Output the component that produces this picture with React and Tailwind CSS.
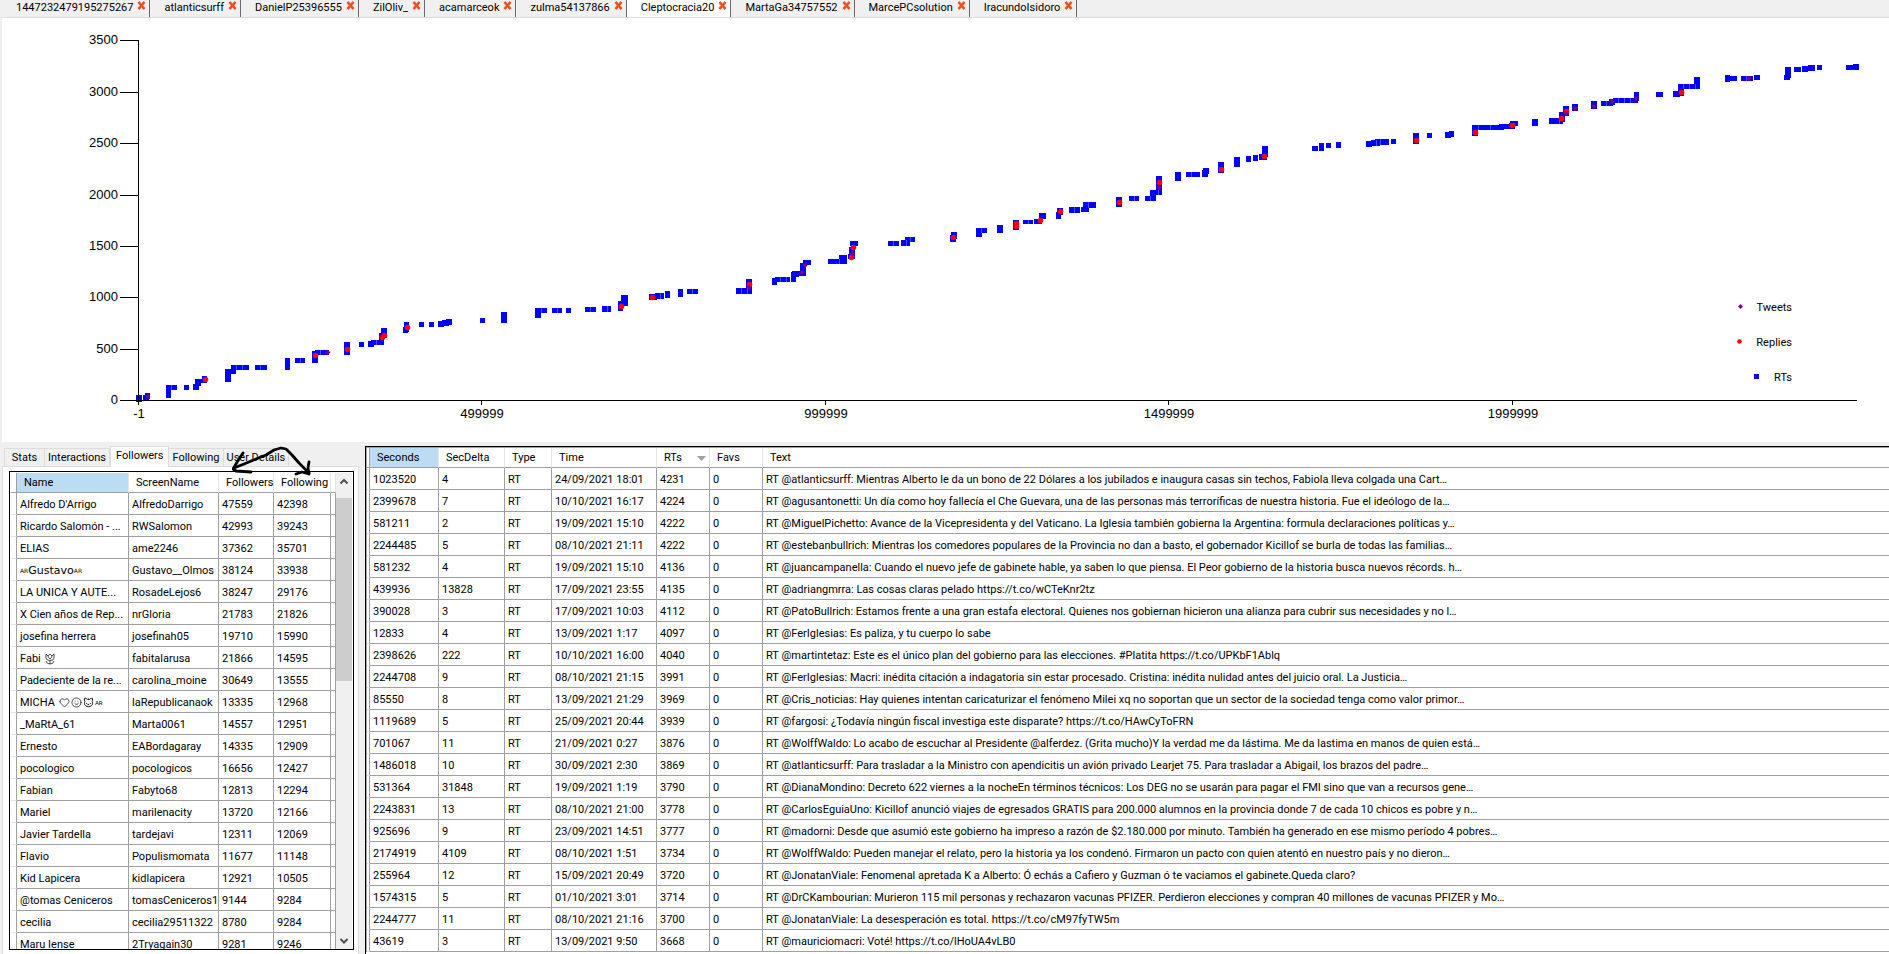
import React, { useState } from 'react';
import { Heart, Smile, Cat } from 'lucide-react';

const userTabs = [
    "1447232479195275267",
    "atlanticsurff",
    "DanielP25396555",
    "ZilOliv_",
    "acamarceok",
    "zulma54137866",
    "Cleptocracia20",
    "MartaGa34757552",
    "MarcePCsolution",
    "IracundoIsidoro",
];

const detailTabs = ["Stats", "Interactions", "Followers", "Following", "User Details"];

// x, y, right, bottom of each run of retweets
const rtRuns = [
    [136, 395, 142, 402], [143, 395, 149, 400], [145, 393, 150, 399], [166, 385, 171, 398], [166, 385, 177, 390],
    [184, 385, 189, 390], [193, 384, 199, 390], [195, 379, 201, 386], [199, 379, 207, 383], [202, 376, 207, 383],
    [225, 369, 231, 382], [228, 369, 236, 374], [231, 365, 249, 370], [255, 365, 267, 370], [285, 358, 290, 370],
    [295, 358, 305, 363], [312, 351, 318, 363], [315, 350, 329, 355], [344, 342, 350, 355], [359, 342, 364, 347],
    [368, 341, 374, 347], [371, 340, 384, 345], [379, 333, 384, 345], [381, 328, 387, 338], [403, 327, 408, 333],
    [404, 322, 409, 332], [419, 322, 424, 327], [429, 322, 434, 327], [438, 321, 444, 327], [442, 320, 449, 326],
    [446, 319, 452, 325], [480, 318, 485, 323], [501, 312, 507, 323], [535, 308, 541, 318], [536, 308, 547, 313],
    [552, 308, 562, 313], [566, 308, 571, 313], [585, 307, 596, 312], [602, 306, 611, 312], [618, 301, 623, 311],
    [621, 295, 628, 306], [649, 294, 657, 300], [655, 293, 664, 299], [665, 291, 670, 298], [678, 289, 683, 297],
    [687, 289, 698, 294], [736, 288, 751, 294], [746, 279, 752, 294], [772, 278, 777, 285], [775, 277, 790, 282],
    [791, 272, 796, 282], [792, 271, 799, 277], [797, 271, 805, 276], [800, 263, 806, 276], [803, 260, 811, 265],
    [828, 259, 834, 264], [834, 259, 845, 264], [839, 255, 847, 264], [848, 254, 854, 259], [849, 247, 855, 259],
    [850, 241, 858, 246], [888, 241, 899, 246], [901, 240, 910, 246], [905, 237, 915, 242], [950, 235, 956, 242],
    [951, 232, 957, 239], [976, 228, 982, 237], [976, 228, 987, 233], [997, 225, 1003, 233], [1013, 220, 1019, 230],
    [1023, 220, 1033, 224], [1034, 219, 1042, 224], [1039, 213, 1046, 219], [1056, 212, 1061, 219], [1057, 208, 1063, 215],
    [1069, 207, 1080, 213], [1081, 207, 1089, 212], [1083, 203, 1088, 212], [1083, 202, 1096, 208], [1116, 197, 1122, 207],
    [1129, 196, 1139, 201], [1145, 196, 1156, 201], [1150, 190, 1156, 201], [1153, 190, 1162, 195], [1156, 176, 1162, 195],
    [1175, 172, 1181, 181], [1186, 172, 1200, 177], [1202, 170, 1208, 177], [1203, 168, 1209, 174], [1218, 162, 1224, 173],
    [1234, 157, 1240, 167], [1246, 156, 1251, 162], [1253, 155, 1258, 161], [1259, 154, 1267, 160], [1262, 146, 1268, 157],
    [1312, 146, 1318, 151], [1319, 143, 1324, 151], [1326, 143, 1331, 148], [1336, 142, 1341, 148], [1366, 141, 1372, 147],
    [1371, 140, 1380, 146], [1375, 139, 1389, 145], [1391, 139, 1396, 144], [1413, 133, 1419, 144], [1427, 133, 1432, 138],
    [1445, 132, 1451, 138], [1449, 131, 1454, 137], [1472, 125, 1478, 136], [1473, 125, 1485, 130], [1485, 125, 1499, 130],
    [1499, 124, 1504, 130], [1503, 124, 1509, 129], [1509, 123, 1515, 129], [1510, 121, 1518, 126], [1532, 119, 1538, 126],
    [1549, 118, 1554, 124], [1554, 118, 1563, 124], [1559, 112, 1565, 122], [1563, 106, 1569, 116], [1572, 104, 1578, 111],
    [1591, 101, 1597, 109], [1601, 101, 1613, 106], [1609, 99, 1615, 105], [1613, 98, 1638, 103], [1634, 92, 1639, 101],
    [1656, 92, 1663, 97], [1673, 91, 1680, 97], [1678, 84, 1684, 96], [1678, 84, 1700, 89], [1694, 77, 1700, 88],
    [1725, 75, 1730, 82], [1730, 76, 1737, 81], [1741, 76, 1753, 81], [1754, 75, 1760, 80], [1784, 75, 1790, 80],
    [1785, 67, 1791, 78], [1794, 67, 1801, 72], [1802, 66, 1808, 72], [1808, 65, 1815, 71], [1817, 65, 1822, 70],
    [1846, 65, 1853, 70], [1853, 64, 1859, 70],
];

const replies = [
    [205, 379], [315, 355], [347, 349], [382, 337], [384, 335], [407, 327], [621, 306], [652, 297], [749, 284],
    [853, 247], [851, 257], [953, 237], [1016, 223], [1016, 226], [1040, 220], [1060, 211], [1119, 202], [1159, 182],
    [1221, 169], [1264, 156], [1416, 140], [1475, 132], [1512, 125], [1561, 118], [1566, 111], [1681, 92],
];

const tweets = [
    [148, 396], [328, 352], [749, 287], [802, 272], [805, 265], [852, 253], [1159, 187], [1566, 113],
    [1575, 108], [1594, 106], [1612, 101], [1636, 98], [1749, 78],
];

// light gaps left between the squares of the long flat runs
const seams = rtRuns.flatMap(([x, y, r, b]) => {
    const list = [];
    if (b - y > 6) return list;
    for (let s = x + 5; s < r - 3; s += 6) {
        list.push([s, y, b]);
    }
    return list;
});

const yTicks = [
    { value: 3500, y: 40 },
    { value: 3000, y: 92 },
    { value: 2500, y: 143 },
    { value: 2000, y: 195 },
    { value: 1500, y: 246 },
    { value: 1000, y: 297 },
    { value: 500, y: 349 },
    { value: 0, y: 400 },
];

const xTicks = [
    { value: -1, x: 139 },
    { value: 499999, x: 482 },
    { value: 999999, x: 826 },
    { value: 1499999, x: 1169 },
    { value: 1999999, x: 1513 },
];

const followers = [
    { name: "Alfredo D'Arrigo", screen: "AlfredoDarrigo", followers: 47559, following: 42398 },
    { name: "Ricardo Salomón - ...", screen: "RWSalomon", followers: 42993, following: 39243 },
    { name: "ELIAS", screen: "ame2246", followers: 37362, following: 35701 },
    { name: "Gustavo", screen: "Gustavo__Olmos", followers: 38124, following: 33938, style: "flags" },
    { name: "LA UNICA Y AUTE...", screen: "RosadeLejos6", followers: 38247, following: 29176 },
    { name: "X Cien años de Rep...", screen: "nrGloria", followers: 21783, following: 21826 },
    { name: "josefina herrera", screen: "josefinah05", followers: 19710, following: 15990 },
    { name: "Fabi", screen: "fabitalarusa", followers: 21866, following: 14595, style: "tulip" },
    { name: "Padeciente de la re...", screen: "carolina_moine", followers: 30649, following: 13555 },
    { name: "MICHA", screen: "laRepublicanaok", followers: 13335, following: 12968, style: "faces" },
    { name: "_MaRtA_61", screen: "Marta0061", followers: 14557, following: 12951 },
    { name: "Ernesto", screen: "EABordagaray", followers: 14335, following: 12909 },
    { name: "pocologico", screen: "pocologicos", followers: 16656, following: 12427 },
    { name: "Fabian", screen: "Fabyto68", followers: 12813, following: 12294 },
    { name: "Mariel", screen: "marilenacity", followers: 13720, following: 12166 },
    { name: "Javier Tardella", screen: "tardejavi", followers: 12311, following: 12069 },
    { name: "Flavio", screen: "Populismomata", followers: 11677, following: 11148 },
    { name: "Kid Lapicera", screen: "kidlapicera", followers: 12921, following: 10505 },
    { name: "@tomas Ceniceros", screen: "tomasCeniceros1", followers: 9144, following: 9284 },
    { name: "cecilia", screen: "cecilia29511322", followers: 8780, following: 9284 },
    { name: "Maru Iense", screen: "2Tryagain30", followers: 9281, following: 9246 },
];

const tweetRows = [
    [1023520, 4, "24/09/2021 18:01", 4231, "RT @atlanticsurff: Mientras Alberto le da un bono de 22 Dólares a los jubilados e inaugura casas sin techos, Fabiola lleva colgada una Cart…"],
    [2399678, 7, "10/10/2021 16:17", 4224, "RT @agusantonetti: Un día como hoy fallecía el Che Guevara, una de las personas más terroríficas de nuestra historia. Fue el ideólogo de la…"],
    [581211, 2, "19/09/2021 15:10", 4222, "RT @MiguelPichetto: Avance de la Vicepresidenta y del Vaticano. La Iglesia también gobierna la Argentina: formula declaraciones políticas y…"],
    [2244485, 5, "08/10/2021 21:11", 4222, "RT @estebanbullrich: Mientras los comedores populares de la Provincia no dan a basto, el gobernador Kicillof se burla de todas las familias…"],
    [581232, 4, "19/09/2021 15:10", 4136, "RT @juancampanella: Cuando el nuevo jefe de gabinete hable, ya saben lo que piensa. El Peor gobierno de la historia busca nuevos récords. h…"],
    [439936, 13828, "17/09/2021 23:55", 4135, "RT @adriangmrra: Las cosas claras pelado https://t.co/wCTeKnr2tz"],
    [390028, 3, "17/09/2021 10:03", 4112, "RT @PatoBullrich: Estamos frente a una gran estafa electoral. Quienes nos gobiernan hicieron una alianza para cubrir sus necesidades y no l…"],
    [12833, 4, "13/09/2021 1:17", 4097, "RT @FerIglesias: Es paliza, y tu cuerpo lo sabe"],
    [2398626, 222, "10/10/2021 16:00", 4040, "RT @martintetaz: Este es el único plan del gobierno para las elecciones. #Platita https://t.co/UPKbF1Ablq"],
    [2244708, 9, "08/10/2021 21:15", 3991, "RT @FerIglesias: Macri: inédita citación a indagatoria sin estar procesado. Cristina: inédita nulidad antes del juicio oral. La Justicia…"],
    [85550, 8, "13/09/2021 21:29", 3969, "RT @Cris_noticias: Hay quienes intentan caricaturizar el fenómeno Milei xq no soportan que un sector de la sociedad tenga como valor primor…"],
    [1119689, 5, "25/09/2021 20:44", 3939, "RT @fargosi: ¿Todavía ningún fiscal investiga este disparate? https://t.co/HAwCyToFRN"],
    [701067, 11, "21/09/2021 0:27", 3876, "RT @WolffWaldo: Lo acabo de escuchar al Presidente @alferdez. (Grita mucho)Y la verdad me da lástima. Me da lastima en manos de quien está…"],
    [1486018, 10, "30/09/2021 2:30", 3869, "RT @atlanticsurff: Para trasladar a la Ministro con apendicitis un avión privado Learjet 75. Para trasladar a Abigail, los brazos del padre…"],
    [531364, 31848, "19/09/2021 1:19", 3790, "RT @DianaMondino: Decreto 622 viernes a la nocheEn términos técnicos: Los DEG no se usarán para pagar el FMI sino que van a recursos gene…"],
    [2243831, 13, "08/10/2021 21:00", 3778, "RT @CarlosEguiaUno: Kicillof anunció viajes de egresados GRATIS para 200.000 alumnos en la provincia donde 7 de cada 10 chicos es pobre y n…"],
    [925696, 9, "23/09/2021 14:51", 3777, "RT @madorni: Desde que asumió este gobierno ha impreso a razón de $2.180.000 por minuto. También ha generado en ese mismo período 4 pobres…"],
    [2174919, 4109, "08/10/2021 1:51", 3734, "RT @WolffWaldo: Pueden manejar el relato, pero la historia ya los condenó. Firmaron un pacto con quien atentó en nuestro país y no dieron…"],
    [255964, 12, "15/09/2021 20:49", 3720, "RT @JonatanViale: Fenomenal apretada K a Alberto: Ó echás a Cafiero y Guzman ó te vaciamos el gabinete.Queda claro?"],
    [1574315, 5, "01/10/2021 3:01", 3714, "RT @DrCKambourian: Murieron 115 mil personas y rechazaron vacunas PFIZER. Perdieron elecciones y compran 40 millones de vacunas PFIZER y Mo…"],
    [2244777, 11, "08/10/2021 21:16", 3700, "RT @JonatanViale: La desesperación es total. https://t.co/cM97fyTW5m"],
    [43619, 3, "13/09/2021 9:50", 3668, "RT @mauriciomacri: Voté! https://t.co/lHoUA4vLB0"],
];

const th = "border-r border-b border-r-[#e5e5e5] border-b-[#a0a0a0] pt-px pl-[7px] text-left font-normal";
const td = "border-r border-b border-[#a0a0a0] pt-[2px] pl-[3px] whitespace-nowrap";

const CloseIcon = () => (
    <svg width="9" height="9" viewBox="0 0 9 9" className="block">
        <path d="M1.5 1 L7.5 8 M7.5 1 L1.5 8" stroke="#f3a58c" strokeWidth="3.2" />
        <path d="M1.5 1 L7.5 8 M7.5 1 L1.5 8" stroke="#e8501e" strokeWidth="2" />
    </svg>
);

const TulipIcon = () => (
    <svg width="10" height="12" viewBox="0 0 10 12" className="block" fill="none" stroke="#222" strokeWidth="0.8">
        <path d="M1 1 L3 3 L5 1 L7 3 L9 1 V5 Q9 7.5 5 7.5 Q1 7.5 1 5 Z" />
        <path d="M3 3 Q3.5 5 5 6 Q6.5 5 7 3 M5 7.5 V11 M5 11 Q1.5 11 1 8 M5 11 Q8.5 11 9 8" />
    </svg>
);

const UserTabs = () => {
    const [active, setActive] = useState("Cleptocracia20");

    return (
        <div className="flex h-[17px] shrink-0 bg-[#f0f0f0] pl-[2px]">
            {userTabs.map((tab) => (
                <div
                    key={tab}
                    className={`flex items-start border-r border-r-[#696969] pr-[3px] pl-[14px] ${active === tab ? "bg-white" : ""}`}
                >
                    <button onClick={() => setActive(tab)} className="leading-4 whitespace-nowrap">{tab}</button>
                    <button aria-label={`Close ${tab}`} className="ml-1 pt-px"><CloseIcon /></button>
                </div>
            ))}
        </div>
    );
};

const Chart = () => (
    <div className="shrink-0 border-t border-l-2 border-t-[#dcdcdc] border-l-[#f0f0f0] bg-white">
        <svg viewBox="2 18 1887 424" className="block w-full font-['Liberation_Sans',sans-serif] text-[13px]">
            {/* Points */}
            <g fill="#0000ff">
                {rtRuns.map(([x, y, r, b], i) => (
                    <rect key={i} x={x} y={y} width={r - x} height={b - y} />
                ))}
            </g>
            <g fill="#fff" fillOpacity="0.3">
                {seams.map(([x, y, b], i) => (
                    <rect key={i} x={x} y={y} width="1" height={b - y} />
                ))}
            </g>
            <g fill="#ff0000">
                {replies.map(([x, y], i) => (
                    <circle key={i} cx={x + 0.5} cy={y + 0.5} r="2.8" />
                ))}
            </g>
            <g fill="#800080">
                {tweets.map(([x, y], i) => (
                    <path key={i} d={`M${x} ${y - 2} l2.5 2.5 l-2.5 2.5 l-2.5 -2.5 Z`} />
                ))}
            </g>

            {/* Axes */}
            <g stroke="#000" strokeWidth="1" shapeRendering="crispEdges">
                <line x1="138.5" y1="40" x2="138.5" y2="405" />
                <line x1="120" y1="400.5" x2="1857" y2="400.5" />
                {yTicks.map((t) => (
                    <line key={t.value} x1="120" y1={t.y + 0.5} x2="139" y2={t.y + 0.5} />
                ))}
                {xTicks.map((t) => (
                    <line key={t.value} x1={t.x - 0.5} y1="400" x2={t.x - 0.5} y2="405" />
                ))}
            </g>
            {yTicks.map((t) => (
                <text key={t.value} x="118" y={t.y + 4} textAnchor="end">{t.value}</text>
            ))}
            {xTicks.map((t) => (
                <text key={t.value} x={t.x} y="418" textAnchor="middle">{t.value}</text>
            ))}

            {/* Legend */}
            <g className="font-['Roboto',sans-serif] text-[11px]" textAnchor="end">
                <path d="M1740.5 304 l2.5 2.5 l-2.5 2.5 l-2.5 -2.5 Z" fill="#800080" />
                <text x="1792" y="311">Tweets</text>
                <circle cx="1739.5" cy="341.5" r="2.3" fill="#ff0000" />
                <text x="1792" y="346">Replies</text>
                <rect x="1754" y="374" width="5" height="5" fill="#0000ff" />
                <text x="1792" y="381">RTs</text>
            </g>
        </svg>
    </div>
);

const FollowerName = ({ row }) => {
    if (row.style === "flags") {
        return (
            <span className="flex items-center font-['DejaVu_Sans',sans-serif]">
                <span className="text-[6px]">AR</span>
                {row.name}
                <span className="text-[6px]">AR</span>
            </span>
        );
    }
    return (
        <span className="flex items-center">
            {row.name}
            {row.style === "tulip" && <span className="ml-1"><TulipIcon /></span>}
            {row.style === "faces" && (
                <span className="ml-1 flex items-center gap-px">
                    <Heart size={11} strokeWidth={1.5} />
                    <Smile size={11} strokeWidth={1.5} />
                    <Cat size={11} strokeWidth={2} />
                    <span className="text-[6px]">AR</span>
                </span>
            )}
        </span>
    );
};

const ScrollBar = () => (
    <div className="flex w-4 shrink-0 flex-col items-center bg-[#f0f0f0]">
        <svg width="16" height="25" viewBox="0 0 16 25" className="block shrink-0" fill="none" stroke="#505050" strokeWidth="2">
            <path d="M4.5 10.5 L8 7 L11.5 10.5" />
        </svg>
        <div className="h-[183px] w-full shrink-0 bg-[#cdcdcd]" />
        <svg width="16" height="16" viewBox="0 0 16 16" className="mt-auto block shrink-0" fill="none" stroke="#505050" strokeWidth="2">
            <path d="M4.5 6 L8 9.5 L11.5 6" />
        </svg>
    </div>
);

const FollowersGrid = () => (
    <div className="flex min-h-0 flex-1 overflow-hidden border border-black bg-white pt-px pr-px">
        <div className="min-w-0 flex-1 overflow-hidden pl-px">
            <table className="w-full table-fixed border-separate border-spacing-0">
                <colgroup>
                    <col className="w-[6px]" />
                    <col className="w-[112px]" />
                    <col className="w-[90px]" />
                    <col className="w-[55px]" />
                    <col className="w-[57px]" />
                    <col />
                </colgroup>
                <thead>
                    <tr className="h-5">
                        <td className="border-r border-b border-[#a0a0a0]" />
                        <th className={`${th} bg-[#bcdcf4]`}>Name</th>
                        <th className={th}>ScreenName</th>
                        <th className={th}>Followers</th>
                        <th className={th}>Following</th>
                        <td className="border-r border-b border-r-[#e5e5e5] border-b-[#a0a0a0]" />
                    </tr>
                </thead>
                <tbody>
                    {followers.map((row) => (
                        <tr key={row.screen} className="h-[22px]">
                            <td className="border-r border-b border-r-[#a0a0a0] border-b-[#e5e5e5]" />
                            <td className={td}><FollowerName row={row} /></td>
                            <td className={td}>{row.screen}</td>
                            <td className={td}>{row.followers}</td>
                            <td className={td}>{row.following}</td>
                            <td className="border-r border-b border-[#a0a0a0]" />
                        </tr>
                    ))}
                </tbody>
            </table>
        </div>
        <ScrollBar />
    </div>
);

const DetailPanel = () => {
    const [active, setActive] = useState("Followers");

    return (
        <div className="flex w-[359px] shrink-0 flex-col pl-[2px]">
            <div className="relative z-10 -mb-px flex h-[21px] items-end pl-[2px]">
                {detailTabs.map((tab) => (
                    <button
                        key={tab}
                        onClick={() => setActive(tab)}
                        className={
                            active === tab
                                ? "h-[21px] border border-b-0 border-[#dcdcdc] bg-white px-[5px] pb-[2px] whitespace-nowrap"
                                : "h-[19px] min-w-[41px] border-t border-r border-b border-[#dcdcdc] px-[3px] whitespace-nowrap first:border-l"
                        }
                    >
                        {tab}
                    </button>
                ))}
                {/* Hand drawn arrow between both count columns */}
                <svg width="80" height="32" viewBox="0 0 80 32" className="absolute top-0 left-[230px]" fill="none" stroke="#000" strokeWidth="2.8" strokeLinecap="round" strokeLinejoin="round">
                    <path d="M11 7 L7 13 L1 23 L4 25 L19 26" />
                    <path d="M2 22 L12 18 L24 13 L34 9 L42 4 L49 2 L54 3 L60 9 L67 17 L73 23 L77 27" />
                    <path d="M64 28 L70 26 L77 28 M77 16 L76 22 L77 28" />
                </svg>
            </div>
            <div className="flex min-h-0 flex-1 flex-col border border-b-0 border-[#dcdcdc] bg-white pt-1 pr-1 pb-1 pl-[6px]">
                <FollowersGrid />
            </div>
        </div>
    );
};

const TweetsGrid = () => (
    <div className="ml-[6px] min-w-0 flex-1 overflow-hidden border-t border-l border-black bg-white">
        <div className="border-t border-l border-[#a0a0a0]">
            <table className="w-full table-fixed border-separate border-spacing-0">
                <colgroup>
                    <col className="w-[3px]" />
                    <col className="w-[69px]" />
                    <col className="w-[66px]" />
                    <col className="w-[47px]" />
                    <col className="w-[105px]" />
                    <col className="w-[53px]" />
                    <col className="w-[53px]" />
                    <col />
                </colgroup>
                <thead>
                    <tr className="h-5">
                        <td className="border-r border-b border-[#a0a0a0]" />
                        <th className={`${th} bg-[#bcdcf4]`}>Seconds</th>
                        <th className={th}>SecDelta</th>
                        <th className={th}>Type</th>
                        <th className={th}>Time</th>
                        <th className={th}>
                            <span className="flex items-center justify-between pr-[3px]">
                                RTs
                                <svg width="9" height="5" viewBox="0 0 9 5"><path d="M0 0 H9 L4.5 5 Z" fill="#a0a0a0" /></svg>
                            </span>
                        </th>
                        <th className={th}>Favs</th>
                        <th className={`${th} last:border-r-0`}>Text</th>
                    </tr>
                </thead>
                <tbody>
                    {tweetRows.map(([seconds, delta, time, rts, text]) => (
                        <tr key={seconds} className="h-[22px]">
                            <td className="border-r border-b border-r-[#a0a0a0] border-b-[#e5e5e5]" />
                            <td className={td}>{seconds}</td>
                            <td className={td}>{delta}</td>
                            <td className={td}>RT</td>
                            <td className={td}>{time}</td>
                            <td className={td}>{rts}</td>
                            <td className={td}>0</td>
                            <td className={`${td} last:border-r-0`}>{text}</td>
                        </tr>
                    ))}
                </tbody>
            </table>
        </div>
    </div>
);

const App = () => {
    return (
        <div className="flex h-screen flex-col overflow-hidden bg-[#f0f0f0] font-['Roboto',sans-serif] text-[11px] leading-4 text-black">
            <UserTabs />
            <Chart />
            <div className="flex min-h-0 flex-1 pt-1">
                <DetailPanel />
                <TweetsGrid />
            </div>
        </div>
    );
};

export default App;
